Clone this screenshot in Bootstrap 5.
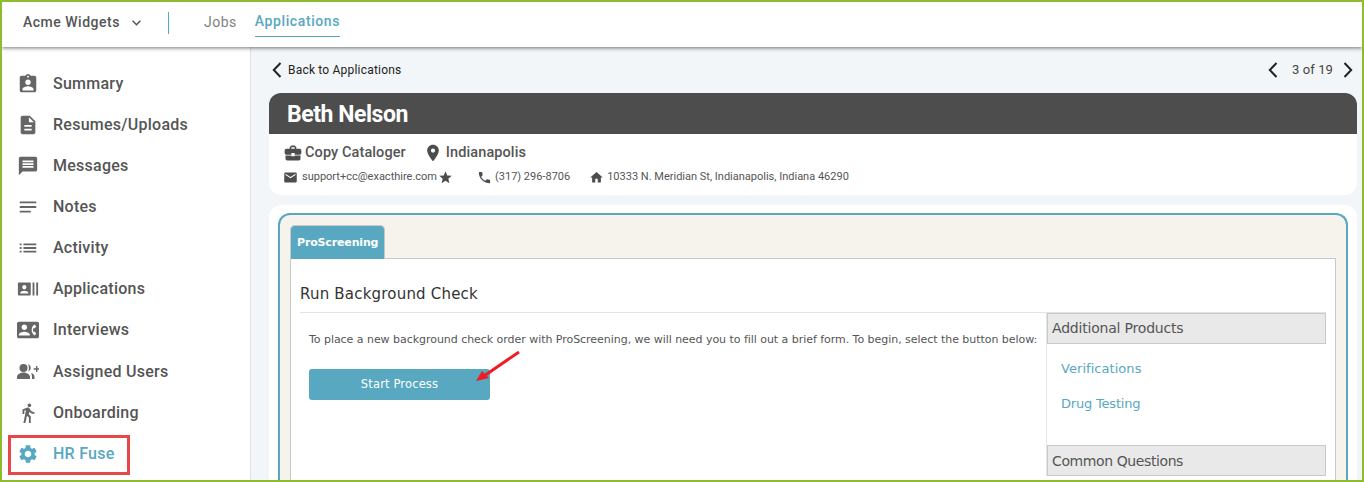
<!DOCTYPE html>
<html lang="en">
<head>
<meta charset="utf-8">
<title>Beth Nelson</title>
<link href="https://cdn.jsdelivr.net/npm/bootstrap@5.3.0/dist/css/bootstrap.min.css" rel="stylesheet">
<style>
html,body{height:482px;overflow:hidden;}
body{font-family:Roboto,sans-serif;background:#fff;}
.frame{position:relative;height:482px;border:2px solid #8fbc2f;overflow:hidden;display:flex;flex-direction:column;}
.topbar{height:45px;flex:none;background:#fff;box-shadow:0 1px 4px rgba(0,0,0,.55);position:relative;z-index:2;padding-left:21px;padding-bottom:4px;}
.org{font-size:14px;font-weight:500;color:#555;letter-spacing:.5px;width:145px;}
.org svg{margin-left:12px;}
.vbar{width:1px;height:22px;background:#58a8c1;}
.tabjobs{font-size:14px;color:#808080;letter-spacing:.5px;margin-left:35px;}
.tabapps{font-size:14px;font-weight:500;color:#58a8c1;letter-spacing:.6px;margin-left:18px;border-bottom:1px solid #58a8c1;height:26px;line-height:21px;margin-top:3px;}
.below{flex:1;min-height:0;}
.side{width:249px;flex:none;background:#fff;border-right:1px solid #dee2e6;padding-top:16.3px;}
.sitem{height:41.1px;padding-left:15px;font-size:16px;font-weight:500;color:#555;letter-spacing:.25px;}
.sitem svg{width:22px;height:22px;fill:#666;flex:none;margin-right:14px;}
.sitem.on{color:#58a8c1;}
.sitem.on svg{fill:#58a8c1;}
.main{flex:1;min-width:0;background:#f2f6f9;padding:0 5px 0 18px;overflow:hidden;}
.crumbs{height:46px;font-size:12px;color:#222;letter-spacing:.2px;}
.chev{width:10px;height:16px;fill:none;stroke:#222;stroke-width:2;flex:none;}
.backchev{margin-left:3px;}
.backlabel{margin-left:6px;}
.pager{margin-right:4px;}
.count{font-size:13px;color:#444;margin:0 10px 0 14px;letter-spacing:.1px;}
.person{background:#fff;border-radius:12px;height:102px;overflow:hidden;}
.phead{background:#4d4d4d;color:#fff;height:41px;font-size:23px;font-weight:700;line-height:43px;padding-left:18px;letter-spacing:-.45px;}
.pline{font-size:14.5px;font-weight:500;color:#555;padding:6px 0 0 14px;height:32px;letter-spacing:.1px;}
.pline svg{width:20px;height:20px;fill:#4d4d4d;flex:none;}
.pline .job{margin-left:2px;margin-right:17px;}
.pline .city{margin-left:3px;}
.cline{font-size:11px;color:#555;padding:3px 0 0 14px;letter-spacing:0;}
.cline svg{width:15px;height:15px;fill:#4d4d4d;flex:none;}
.cline .t{margin-left:3px;}
.cline .mail{margin-left:4px;}
.cline .stari{margin-left:1px;margin-right:24px;}
.cline .homei{margin-left:19px;}
.wrapcard{background:#fff;border-radius:12px 12px 0 0;margin-top:10px;padding:8px 9px 0 9px;height:300px;}
.teal{border:2px solid #58a8c1;border-bottom:0;border-radius:12px 12px 0 0;background:#f6f3ec;height:300px;padding:10px 10px 0 10px;}
.protab{display:inline-block;background:#58a8c1;color:#fff;font-family:"DejaVu Sans",sans-serif;font-weight:700;font-size:11px;height:34px;line-height:34px;padding:0 6px;width:95px;border:1px solid #c9c9c9;border-bottom:0;border-radius:5px 5px 0 0;letter-spacing:-.15px;vertical-align:bottom;white-space:nowrap;}
.pane{background:#fff;border:1px solid #c9c9c9;border-bottom:0;height:240px;padding:0 9px;font-family:"DejaVu Sans",sans-serif;margin-top:-1px;}
.ptitle{font-size:15px;color:#333;height:54px;line-height:70px;border-bottom:1px solid #e3e3e3;letter-spacing:.2px;}
.lcol{flex:1;min-width:0;border-right:1px solid #e6e6e6;padding:19px 0 0 9px;font-size:11px;color:#555;}
.intro{letter-spacing:-.04px;white-space:nowrap;}
.startbtn{display:block;background:#58a8c1;color:#fff;width:181px;height:31px;line-height:31px;padding:0;font-size:11.5px;letter-spacing:.15px;border:0;border-radius:3px;margin-top:20px;}
.rcol{width:279px;flex:none;}
.hbox{background:#e9e9e9;border:1px solid #c9c9c9;height:31px;line-height:29px;padding-left:4px;font-size:14px;color:#555;letter-spacing:-.2px;}
.hbox.cq{line-height:30px;letter-spacing:-.4px;}
.xlink{display:block;color:#58a8c1;text-decoration:none;font-size:13px;padding-left:14px;height:35px;line-height:35px;letter-spacing:.05px;}
.xlink.dt{letter-spacing:-.2px;}
.links{padding-top:7px;height:101px;}
.redbox{position:absolute;left:6px;top:433px;width:122px;height:40px;border:3px solid #e8474a;z-index:3;}
.arrow{position:absolute;left:470px;top:346px;width:54px;height:40px;z-index:3;}
</style>
</head>
<body>
<div class="frame">
  <div class="topbar d-flex align-items-center">
    <div class="org d-flex align-items-center">Acme Widgets<svg width="9" height="6" viewBox="0 0 9 6" fill="none" stroke="#555" stroke-width="1.500"><path d="M.6.8l3.900 3.900L8.400.8"/></svg></div>
    <div class="vbar"></div>
    <div class="tabjobs">Jobs</div>
    <div class="tabapps">Applications</div>
  </div>
  <div class="below d-flex">
    <div class="side">
      <div class="sitem d-flex align-items-center"><svg viewBox="0 0 24 24"><path d="M19 3h-4.180C14.400 1.840 13.300 1 12 1c-1.300 0-2.400.84-2.820 2H5c-1.100 0-2 .9-2 2v14c0 1.100.9 2 2 2h14c1.100 0 2-.9 2-2V5c0-1.100-.9-2-2-2zm-7 0c.55 0 1 .45 1 1s-.45 1-1 1-1-.45-1-1 .45-1 1-1zm0 4c1.660 0 3 1.340 3 3s-1.340 3-3 3-3-1.340-3-3 1.340-3 3-3zm6 12H6v-1.400c0-2 4-3.100 6-3.100s6 1.100 6 3.100V19z"/></svg>Summary</div>
      <div class="sitem d-flex align-items-center"><svg viewBox="0 0 24 24"><path d="M14 2H6c-1.100 0-1.990.9-1.990 2L4 20c0 1.100.89 2 1.990 2H18c1.100 0 2-.9 2-2V8l-6-6zm2 16H8v-2h8v2zm0-4H8v-2h8v2zm-3-5V3.500L18.500 9H13z"/></svg>Resumes/Uploads</div>
      <div class="sitem d-flex align-items-center"><svg viewBox="0 0 24 24"><path d="M20 2H4c-1.100 0-1.990.9-1.990 2L2 22l4-4h14c1.100 0 2-.9 2-2V4c0-1.100-.9-2-2-2zm-2 12H6v-2h12v2zm0-3H6V9h12v2zm0-3H6V6h12v2z"/></svg>Messages</div>
      <div class="sitem d-flex align-items-center"><svg viewBox="0 0 24 24"><path d="M3 18h12v-2H3v2zM3 6v2h18V6H3zm0 7h18v-2H3v2z"/></svg>Notes</div>
      <div class="sitem d-flex align-items-center"><svg viewBox="0 0 24 24"><path d="M3 13h2v-2H3v2zm0 4h2v-2H3v2zm0-8h2V7H3v2zm4 4h14v-2H7v2zm0 4h14v-2H7v2zM7 7v2h14V7H7z"/></svg>Activity</div>
      <div class="sitem d-flex align-items-center"><svg viewBox="0 0 24 24"><path d="M21 5v14h2V5h-2zm-4 14h2V5h-2v14zM14 5H2c-.55 0-1 .45-1 1v12c0 .55.45 1 1 1h12c.55 0 1-.45 1-1V6c0-.55-.45-1-1-1zM8 7.750c1.240 0 2.250 1.010 2.250 2.250S9.240 12.250 8 12.250 5.750 11.240 5.750 10 6.760 7.750 8 7.750zM12.500 17h-9v-.75c0-1.500 3-2.250 4.500-2.250s4.500.75 4.500 2.250V17z"/></svg>Applications</div>
      <div class="sitem d-flex align-items-center"><svg viewBox="0 0 24 24"><path d="M22 3H2C.9 3 0 3.900 0 5v14c0 1.100.9 2 2 2h20c1.100 0 1.990-.9 1.990-2L24 5c0-1.100-.9-2-2-2zM8 6c1.660 0 3 1.340 3 3s-1.340 3-3 3-3-1.340-3-3 1.340-3 3-3zm6 12H2v-1c0-2 4-3.100 6-3.100s6 1.100 6 3.100v1zm3.850-4h1.640L21 16l-1.990 1.990c-1.310-.98-2.280-2.380-2.730-3.990-.18-.64-.28-1.310-.28-2s.1-1.360.28-2c.45-1.620 1.420-3.010 2.730-3.990L21 8l-1.510 2h-1.640c-.22.63-.35 1.300-.35 2s.13 1.370.35 2z"/></svg>Interviews</div>
      <div class="sitem d-flex align-items-center"><svg viewBox="0 0 22 22"><circle cx="6.500" cy="7" r="4"/><path d="M0 18v-2c0-3 4-4.500 6.500-4.500S13 13 13 16v2zM11 3.200a4 4 0 0 1 0 7.600 5.500 5.500 0 0 0 .8-3.800 5.500 5.500 0 0 0-.8-3.800zM14 12c2 .5 3.500 1.800 3.500 4v2H15v-2c0-1.600-.3-2.900-1-4zM19 5v2.300h-2.400v1.400H19V11h1.400V8.700H22.400V7.300h-2V5z"/></svg>Assigned Users</div>
      <div class="sitem d-flex align-items-center"><svg viewBox="0 0 24 24"><path d="M13.500 5.500c1.100 0 2-.9 2-2s-.9-2-2-2-2 .9-2 2 .9 2 2 2zM9.800 8.900L7 23h2.100l1.800-8 2.100 2v6h2v-7.500l-2.100-2 .6-3C14.800 12 16.800 13 19 13v-2c-1.900 0-3.500-1-4.300-2.400l-1-1.600c-.4-.6-1-1-1.700-1-.3 0-.5.1-.8.1L6 8.300V13h2V9.600l1.800-.7"/></svg>Onboarding</div>
      <div class="sitem on d-flex align-items-center"><svg viewBox="0 0 24 24"><path d="M19.140 12.940c.04-.3.06-.61.06-.94 0-.32-.02-.64-.07-.94l2.030-1.580c.18-.14.23-.41.12-.61l-1.920-3.320c-.12-.22-.37-.29-.59-.22l-2.390.96c-.5-.38-1.030-.7-1.620-.94l-.36-2.540c-.04-.24-.24-.41-.48-.41h-3.840c-.24 0-.43.17-.47.41l-.36 2.540c-.59.24-1.130.57-1.620.94l-2.390-.96c-.22-.08-.47 0-.59.22L2.740 8.870c-.12.21-.08.47.12.61l2.030 1.580c-.05.3-.09.63-.09.94s.02.64.07.94l-2.030 1.580c-.18.14-.23.41-.12.61l1.920 3.320c.12.22.37.29.59.22l2.390-.96c.5.38 1.030.7 1.620.94l.36 2.540c.05.24.24.41.48.41h3.840c.24 0 .44-.17.47-.41l.36-2.540c.59-.24 1.130-.56 1.620-.94l2.390.96c.22.08.47 0 .59-.22l1.920-3.320c.12-.22.07-.47-.12-.61l-2.010-1.580zM12 15.600c-1.980 0-3.600-1.620-3.600-3.600s1.620-3.600 3.600-3.600 3.600 1.620 3.600 3.600-1.620 3.600-3.600 3.600z"/></svg>HR Fuse</div>
    </div>
    <div class="main">
      <div class="crumbs d-flex align-items-center justify-content-between">
        <div class="d-flex align-items-center"><svg class="chev backchev" viewBox="0 0 10 16"><path d="M8.500 1L1.800 8l6.700 7"/></svg><span class="backlabel">Back to Applications</span></div>
        <div class="d-flex align-items-center pager"><svg class="chev" viewBox="0 0 10 16"><path d="M8.500 1L1.800 8l6.700 7"/></svg><span class="count">3 of 19</span><svg class="chev" viewBox="0 0 10 16"><path d="M1.500 1l6.700 7-6.700 7"/></svg></div>
      </div>
      <div class="person">
        <div class="phead">Beth Nelson</div>
        <div class="pline d-flex align-items-center"><svg viewBox="0 0 24 24"><path d="M10 16v-1H3.010L3 19c0 1.110.89 2 2 2h14c1.110 0 2-.89 2-2v-4h-7v1h-4zm10-9h-4.010V5l-2-2h-4l-2 2v2H4c-1.100 0-2 .9-2 2v3c0 1.110.89 2 2 2h6v-2h4v2h6c1.100 0 2-.9 2-2V9c0-1.100-.9-2-2-2zm-6 0h-4V5h4v2z"/></svg><span class="job">Copy Cataloger</span><svg viewBox="0 0 24 24"><path d="M12 2C8.130 2 5 5.130 5 9c0 5.250 7 13 7 13s7-7.750 7-13c0-3.870-3.130-7-7-7zm0 9.500c-1.380 0-2.500-1.120-2.500-2.500s1.120-2.500 2.500-2.500 2.500 1.120 2.500 2.500-1.120 2.500-2.500 2.500z"/></svg><span class="city">Indianapolis</span></div>
        <div class="cline d-flex align-items-center"><svg viewBox="0 0 24 24"><path d="M20 4H4c-1.100 0-1.990.9-1.990 2L2 18c0 1.100.9 2 2 2h16c1.100 0 2-.9 2-2V6c0-1.100-.9-2-2-2zm0 4l-8 5-8-5V6l8 5 8-5v2z"/></svg><span class="t mail">support+cc@exacthire.com</span><svg class="stari" viewBox="0 0 24 24"><path d="M12 17.270L18.180 21l-1.640-7.030L22 9.240l-7.190-.61L12 2 9.190 8.630 2 9.240l5.460 4.730L5.820 21z"/></svg><svg viewBox="0 0 24 24"><path d="M6.620 10.790c1.440 2.830 3.760 5.140 6.590 6.590l2.200-2.200c.27-.27.67-.36 1.020-.24 1.120.37 2.330.57 3.570.57.55 0 1 .45 1 1V20c0 .55-.45 1-1 1-9.390 0-17-7.610-17-17 0-.55.45-1 1-1h3.500c.55 0 1 .45 1 1 0 1.250.2 2.450.57 3.570.11.35.03.74-.25 1.020l-2.200 2.200z"/></svg><span class="t">(317) 296-8706</span><svg class="homei" viewBox="0 0 24 24"><path d="M10 20v-6h4v6h5v-8h3L12 3 2 12h3v8z"/></svg><span class="t">10333 N. Meridian St, Indianapolis, Indiana 46290</span></div>
      </div>
      <div class="wrapcard">
        <div class="teal">
          <div class="protab">ProScreening</div>
          <div class="pane">
            <div class="ptitle">Run Background Check</div>
            <div class="d-flex">
              <div class="lcol">
                <div class="intro">To place a new background check order with ProScreening, we will need you to fill out a brief form. To begin, select the button below:</div>
                <button type="button" class="btn startbtn">Start Process</button>
              </div>
              <div class="rcol">
                <div class="hbox">Additional Products</div>
                <div class="links"><a class="xlink" href="#">Verifications</a><a class="xlink dt" href="#">Drug Testing</a></div>
                <div class="hbox cq">Common Questions</div>
              </div>
            </div>
          </div>
        </div>
      </div>
    </div>
  </div>
  <div class="redbox"></div>
  <svg class="arrow" viewBox="0 0 54 40"><path d="M47 4L12 28" stroke="#ee1c25" stroke-width="3" fill="none"/><path d="M4 33L10 23 17 30z" fill="#ee1c25"/></svg>
</div>
</body>
</html>
